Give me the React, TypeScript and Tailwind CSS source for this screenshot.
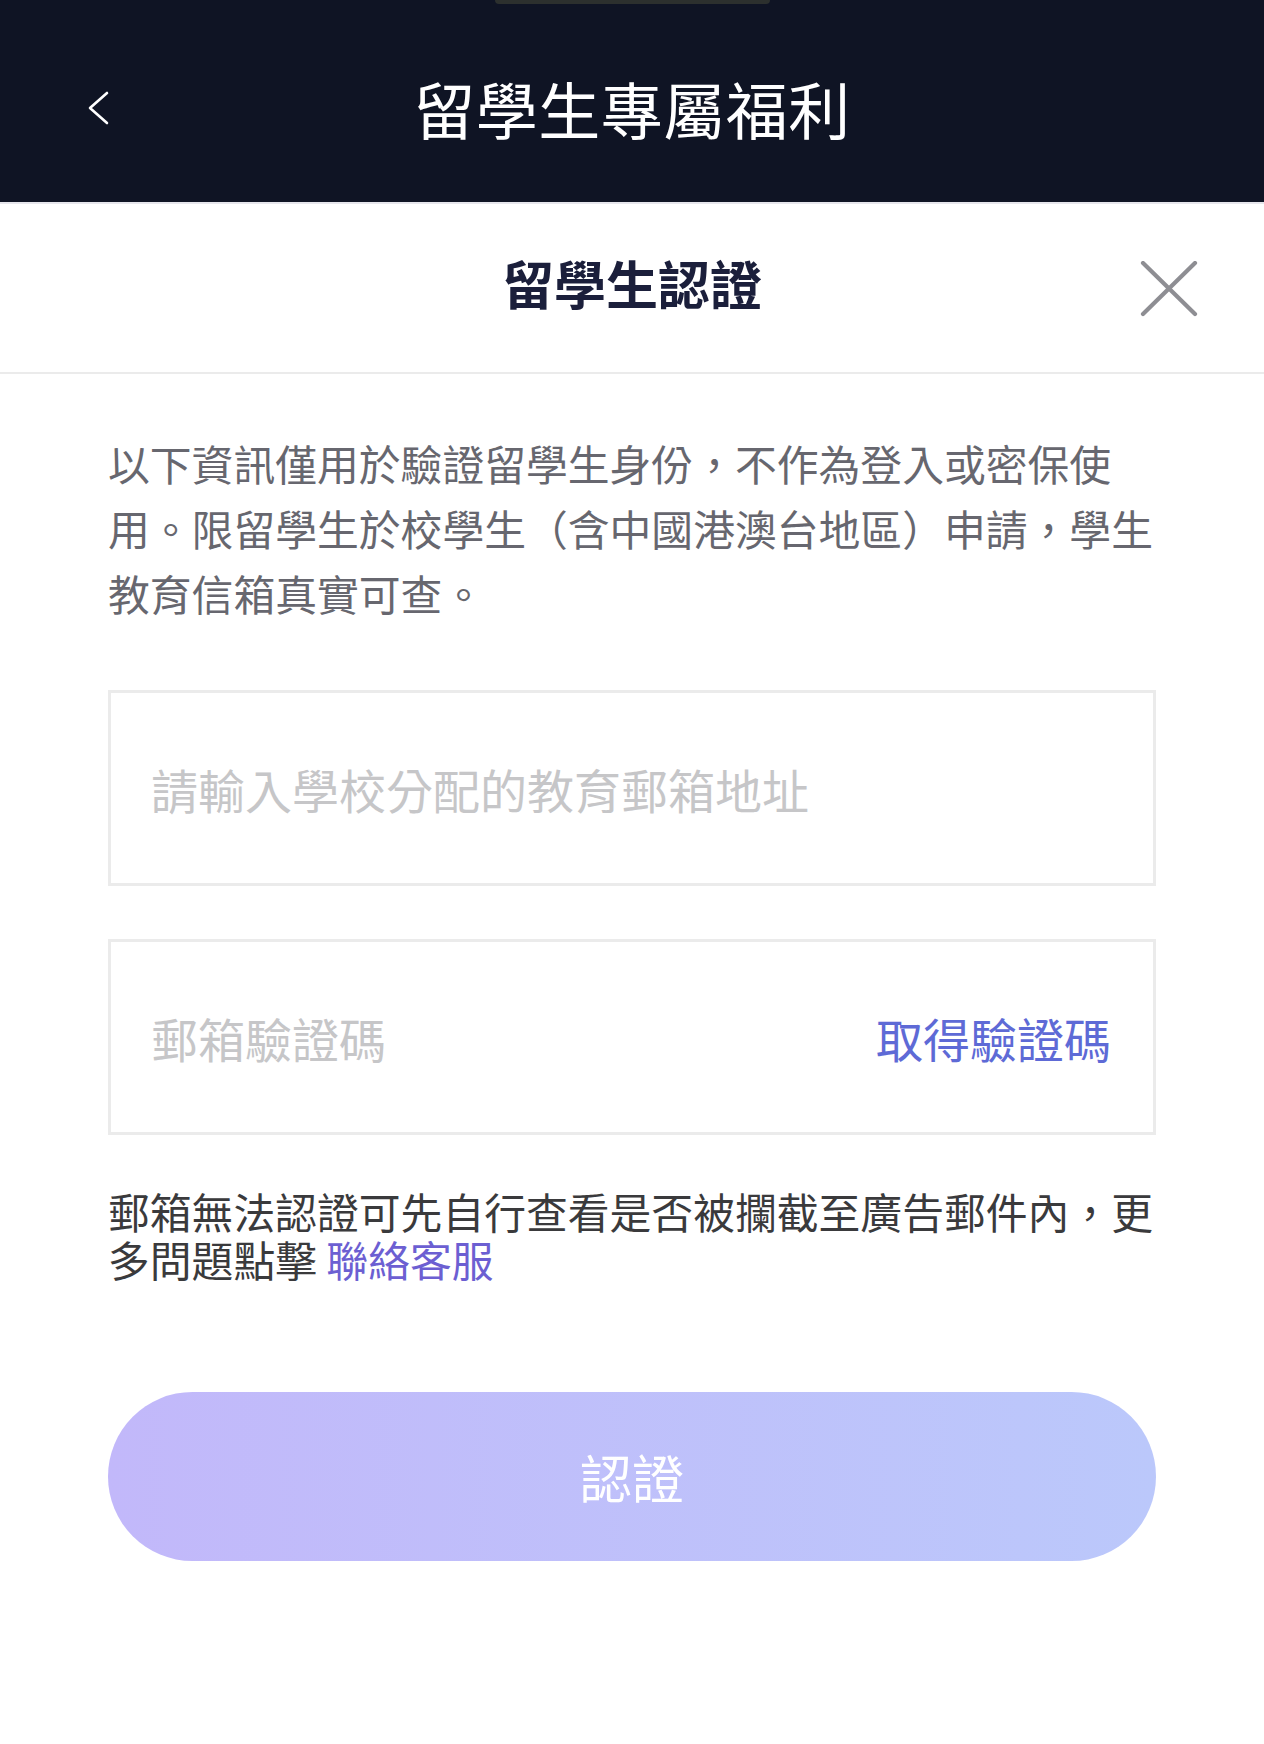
const cjk = "font-['Noto_Sans_CJK_TC','Noto_Sans_CJK_SC',sans-serif]";

function BackIcon() {
  return (
    <svg width="22" height="34" viewBox="0 0 22 34" fill="none">
      <path d="M19 2 L2 17 L19 32" stroke="#ffffff" strokeWidth="2.6" strokeLinecap="round" strokeLinejoin="round" />
    </svg>
  );
}

function CloseIcon() {
  return (
    <svg width="58" height="56" viewBox="0 0 58 56" fill="none">
      <path d="M3 2 L55 53 M55 2 L3 53" stroke="#8e8e93" strokeWidth="4.2" strokeLinecap="round" />
    </svg>
  );
}

export default function App() {
  return (
    <div className={`min-h-[1744px] w-full bg-white ${cjk}`}>
      {/* Top bar */}
      <header className="relative h-[202px] bg-[#0f1424] flex items-center pt-[14px]">
        <div className="absolute left-[495px] top-0 h-[4px] w-[275px] rounded-b-full bg-[#2c302e]" />
        <div className="absolute left-[88px] top-[91px]">
          <BackIcon />
        </div>
        <h1 className="flex-1 text-center text-[62px] leading-none text-white tracking-[0.5px]">
          留學生專屬福利
        </h1>
      </header>

      {/* Sheet header */}
      <div className="relative h-[172px] border-t-[2px] border-[#e6e6ec] border-b-[2px] border-b-[#ebebeb] flex items-center justify-center">
        <h2 className="text-[52px] font-bold leading-none text-[#1b1f3b] -mt-[10px]">留學生認證</h2>
        <button className="absolute left-[1140px] top-[57px]">
          <CloseIcon />
        </button>
      </div>

      {/* Content */}
      <div className="px-[108px]">
        <p className="mt-[57px] text-[41.8px] leading-[65px] text-[#67676f]">
          以下資訊僅用於驗證留學生身份，不作為登入或密保使用。限留學生於校學生（含中國港澳台地區）申請，學生教育信箱真實可查。
        </p>

        <div className="mt-[64px] h-[196px] border-[3px] border-[#ebebeb] flex items-center pl-[40px] pr-[42px]">
          <span className="text-[47px] leading-none text-[#c6c6c8]">請輸入學校分配的教育郵箱地址</span>
        </div>

        <div className="mt-[53px] h-[196px] border-[3px] border-[#ebebeb] flex items-center justify-between pl-[40px] pr-[42px]">
          <span className="text-[47px] leading-none text-[#c6c6c8]">郵箱驗證碼</span>
          <span className="text-[47px] leading-none text-[#5e6ad6]">取得驗證碼</span>
        </div>

        <p className="mt-[52px] text-[41.8px] leading-[48px] text-[#3a3a3c]">
          郵箱無法認證可先自行查看是否被攔截至廣告郵件內，更多問題點擊 <span className="text-[#6c5fd2]">聯絡客服</span>
        </p>

        <button className="mt-[109px] w-full h-[169px] rounded-full bg-linear-to-r from-[#c2b8fa] to-[#bbc8fb] flex items-center justify-center">
          <span className="text-[52px] leading-none text-white">認證</span>
        </button>
      </div>
    </div>
  );
}
